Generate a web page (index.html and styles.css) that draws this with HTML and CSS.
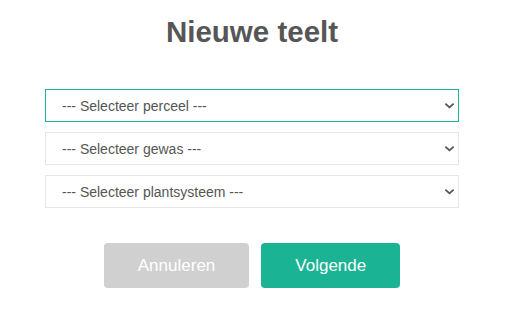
FILE: index.html
```html
<!DOCTYPE html>
<html lang="nl">
<head>
<meta charset="utf-8">
<title>Nieuwe teelt</title>
<link rel="stylesheet" href="styles.css">
</head>
<body>
<main class="wizard">
  <h1 class="title">Nieuwe teelt</h1>
  <form class="form">
    <div class="fields">
      <div class="select-wrap">
        <select class="select select--active">
          <option>--- Selecteer perceel ---</option>
        </select>
        <svg class="chevron" viewBox="0 0 10 6" aria-hidden="true"><path d="M1 1 L5 4.6 L9 1" fill="none" stroke="#555" stroke-width="2" stroke-linecap="round" stroke-linejoin="round"/></svg>
      </div>
      <div class="select-wrap">
        <select class="select">
          <option>--- Selecteer gewas ---</option>
        </select>
        <svg class="chevron" viewBox="0 0 10 6" aria-hidden="true"><path d="M1 1 L5 4.6 L9 1" fill="none" stroke="#555" stroke-width="2" stroke-linecap="round" stroke-linejoin="round"/></svg>
      </div>
      <div class="select-wrap">
        <select class="select">
          <option>--- Selecteer plantsysteem ---</option>
        </select>
        <svg class="chevron" viewBox="0 0 10 6" aria-hidden="true"><path d="M1 1 L5 4.6 L9 1" fill="none" stroke="#555" stroke-width="2" stroke-linecap="round" stroke-linejoin="round"/></svg>
      </div>
    </div>
    <div class="actions">
      <button type="button" class="btn btn--cancel">Annuleren</button>
      <button type="button" class="btn btn--primary">Volgende</button>
    </div>
  </form>
</main>
</body>
</html>
```

FILE: styles.css
```css
html, body {
  margin: 0;
  padding: 0;
  background: #ffffff;
}

body {
  font-family: "Liberation Sans", Arial, sans-serif;
  color: #555555;
}

.wizard {
  width: 414px;
  margin: 0 0 0 45px;
  padding-top: 15px;
}

.title {
  margin: 0;
  font-size: 29.5px;
  line-height: 34px;
  font-weight: bold;
  text-align: center;
  color: #565656;
}

.form {
  margin-top: 40px;
}

.fields {
  display: flex;
  flex-direction: column;
  gap: 10px;
}

.select-wrap {
  position: relative;
  height: 33px;
}

.select {
  appearance: none;
  -webkit-appearance: none;
  box-sizing: border-box;
  width: 100%;
  height: 33px;
  margin: 0;
  padding: 1px 30px 0 16px;
  border: 1px solid #e5e6e7;
  border-radius: 0;
  background: #ffffff;
  font-family: "Liberation Sans", Arial, sans-serif;
  font-size: 14px;
  color: #555555;
  outline: none;
}

.select--active {
  border-color: #1ab394;
}

.chevron {
  position: absolute;
  right: 5px;
  top: 14px;
  width: 9px;
  height: 6px;
  pointer-events: none;
}

.actions {
  margin-top: 35px;
  display: flex;
  justify-content: center;
  gap: 12px;
}

.btn {
  box-sizing: border-box;
  height: 45px;
  padding: 0 34px;
  border: none;
  border-radius: 4px;
  font-family: "Liberation Sans", Arial, sans-serif;
  font-size: 17px;
  color: #ffffff;
  cursor: pointer;
}

.btn--cancel {
  background: #d0d0d0;
}

.btn--primary {
  background: #1ab394;
}
```
